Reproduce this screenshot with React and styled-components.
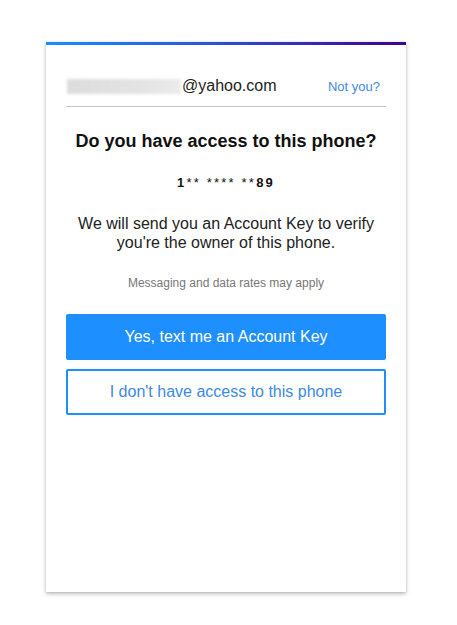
import React from "react";
import styled, { createGlobalStyle } from "styled-components";

const GlobalStyle = createGlobalStyle`
  body {
    margin: 0;
    background: #fff;
    font-family: Arial, "Liberation Sans", Helvetica, sans-serif;
  }
`;

const App = () => {
  return (
    <>
      <GlobalStyle />
      <Page>
        <Card>
          <Bar />
          <Body>
            <AccountRow>
              <Email>
                <Masked />
                @yahoo.com
              </Email>
              <NotYou href="#">Not you?</NotYou>
            </AccountRow>
            <Title>Do you have access to this phone?</Title>
            <Phone>
              1<Stars>** **** **</Stars>89
            </Phone>
            <Text>
              We will send you an Account Key to verify you're the owner of this
              phone.
            </Text>
            <Note>Messaging and data rates may apply</Note>
            <Button primary>Yes, text me an Account Key</Button>
            <Button>I don't have access to this phone</Button>
          </Body>
        </Card>
      </Page>
    </>
  );
};

export default App;

const Page = styled.div`
  width: 457px;
  height: 625px;
  padding: 42px 0 0 46px;
  box-sizing: border-box;
  display: flex;
  align-items: flex-start;
`;

const Card = styled.div`
  width: 360px;
  height: 550px;
  background: #fff;
  box-shadow: 0 2px 4px rgba(0, 0, 0, 0.25), 0 0 2px rgba(0, 0, 0, 0.12);
  display: flex;
  flex-direction: column;
`;

const Bar = styled.div`
  height: 3px;
  background: linear-gradient(90deg, #188fff 0%, #2b55d8 45%, #400090 100%);
`;

const Body = styled.div`
  padding: 0 20px;
  display: flex;
  flex-direction: column;
  align-items: stretch;
`;

const AccountRow = styled.div`
  display: flex;
  align-items: center;
  justify-content: space-between;
  margin-top: 32px;
  padding-bottom: 11px;
  border-bottom: 1px solid #c6c6c6;
`;

const Email = styled.div`
  display: flex;
  align-items: center;
  font-size: 16px;
  color: #222;
  line-height: 18px;
`;

const Masked = styled.span`
  display: inline-block;
  width: 114px;
  height: 15px;
  margin-left: 1px;
  margin-right: 1px;
  background: linear-gradient(90deg, #dcdcdc, #e4e4e4 70%, #ececec);
  filter: blur(1.5px);
`;

const NotYou = styled.a`
  font-size: 13px;
  color: #3d8ae0;
  text-decoration: none;
  margin-right: 6px;
`;

const Title = styled.h1`
  margin: 24px 0 0;
  font-size: 18px;
  font-weight: bold;
  color: #111;
  text-align: center;
  line-height: 20px;
`;

const Phone = styled.div`
  margin-top: 24px;
  font-size: 13px;
  font-weight: bold;
  letter-spacing: 2.2px;
  text-align: center;
  color: #111;
  line-height: 16px;
`;

const Stars = styled.span`
  font-weight: normal;
`;

const Text = styled.p`
  margin: 23px 0 0;
  padding: 0 10px;
  font-size: 16px;
  line-height: 19px;
  text-align: center;
  color: #222;
`;

const Note = styled.div`
  margin-top: 24px;
  font-size: 12px;
  color: #777;
  text-align: center;
  line-height: 14px;
`;

const Button = styled.button`
  margin-top: ${(p) => (p.primary ? "24px" : "9px")};
  height: 46px;
  width: 100%;
  border-radius: 2px;
  font-family: Arial, "Liberation Sans", Helvetica, sans-serif;
  font-size: 16px;
  cursor: pointer;
  border: 2px solid #1e8fff;
  background: ${(p) => (p.primary ? "#1e8fff" : "#fff")};
  color: ${(p) => (p.primary ? "#fff" : "#3d8ae0")};
`;
